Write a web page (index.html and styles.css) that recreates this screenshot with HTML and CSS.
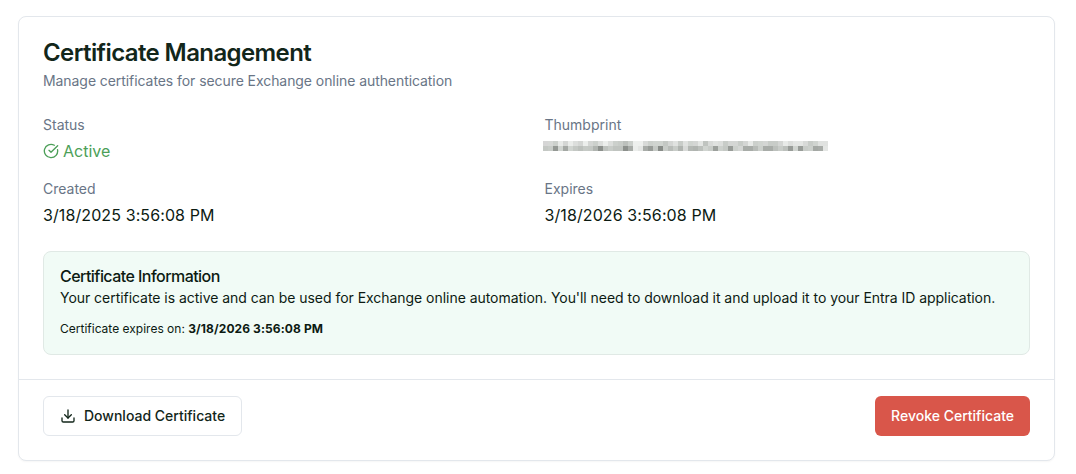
FILE: index.html
```html
<!DOCTYPE html>
<html lang="en">
<head>
<meta charset="utf-8">
<title>Certificate Management</title>
<link rel="stylesheet" href="styles.css">
</head>
<body>
<section class="card">
  <header class="card-header">
    <h1>Certificate Management</h1>
    <p>Manage certificates for secure Exchange online authentication</p>
  </header>
  <div class="card-body">
    <div class="grid">
      <div class="field">
        <div class="label">Status</div>
        <div class="value active">
          <svg class="icon" viewBox="0 0 24 24" fill="none" stroke="currentColor" stroke-width="2" stroke-linecap="round" stroke-linejoin="round"><path d="M21.8 10A10 10 0 1 1 17 3.34"/><path d="m9 11 3 3L22 4"/></svg>
          <span>Active</span>
        </div>
      </div>
      <div class="field">
        <div class="label">Thumbprint</div>
        <div class="value thumb">
          <svg class="mosaic" viewBox="0 0 57 2" shape-rendering="crispEdges" preserveAspectRatio="none" aria-label="Redacted thumbprint">
            <rect x="0" y="0" width="1" height="1" fill="#d6d6d6"/><rect x="1" y="0" width="1" height="1" fill="#d6d8d6"/><rect x="2" y="0" width="1" height="1" fill="#ccd0cc"/><rect x="3" y="0" width="1" height="1" fill="#e8eae8"/><rect x="4" y="0" width="1" height="1" fill="#d4d6d4"/><rect x="5" y="0" width="1" height="1" fill="#eaecea"/><rect x="6" y="0" width="1" height="1" fill="#dcdedc"/><rect x="7" y="0" width="1" height="1" fill="#d4d6d4"/><rect x="8" y="0" width="1" height="1" fill="#eceeec"/><rect x="9" y="0" width="1" height="1" fill="#d4d6d4"/><rect x="10" y="0" width="1" height="1" fill="#ccd0cc"/><rect x="11" y="0" width="1" height="1" fill="#dcdedc"/><rect x="12" y="0" width="1" height="1" fill="#eceeec"/><rect x="13" y="0" width="1" height="1" fill="#dcdedc"/><rect x="14" y="0" width="1" height="1" fill="#ccd0cc"/><rect x="15" y="0" width="1" height="1" fill="#c8ccc8"/><rect x="16" y="0" width="1" height="1" fill="#bcc0bc"/><rect x="17" y="0" width="1" height="1" fill="#ccd0cc"/><rect x="18" y="0" width="1" height="1" fill="#eef0ee"/><rect x="19" y="0" width="1" height="1" fill="#eef0ee"/><rect x="20" y="0" width="1" height="1" fill="#d8dad8"/><rect x="21" y="0" width="1" height="1" fill="#ccd0cc"/><rect x="22" y="0" width="1" height="1" fill="#d0d4d0"/><rect x="23" y="0" width="1" height="1" fill="#d0d4d0"/><rect x="24" y="0" width="1" height="1" fill="#c4c8c4"/><rect x="25" y="0" width="1" height="1" fill="#d4d6d4"/><rect x="26" y="0" width="1" height="1" fill="#e0e2e0"/><rect x="27" y="0" width="1" height="1" fill="#c8ccc8"/><rect x="28" y="0" width="1" height="1" fill="#e0e2e0"/><rect x="29" y="0" width="1" height="1" fill="#d0d4d0"/><rect x="30" y="0" width="1" height="1" fill="#d4d6d4"/><rect x="31" y="0" width="1" height="1" fill="#e4e6e4"/><rect x="32" y="0" width="1" height="1" fill="#c0c4c0"/><rect x="33" y="0" width="1" height="1" fill="#d8dad8"/><rect x="34" y="0" width="1" height="1" fill="#e0e2e0"/><rect x="35" y="0" width="1" height="1" fill="#dcdedc"/><rect x="36" y="0" width="1" height="1" fill="#c8ccc8"/><rect x="37" y="0" width="1" height="1" fill="#d4d6d4"/><rect x="38" y="0" width="1" height="1" fill="#d4d6d4"/><rect x="39" y="0" width="1" height="1" fill="#c8ccc8"/><rect x="40" y="0" width="1" height="1" fill="#d4d6d4"/><rect x="41" y="0" width="1" height="1" fill="#e8eae8"/><rect x="42" y="0" width="1" height="1" fill="#ccd0cc"/><rect x="43" y="0" width="1" height="1" fill="#d0d4d0"/><rect x="44" y="0" width="1" height="1" fill="#d4d6d4"/><rect x="45" y="0" width="1" height="1" fill="#c8ccc8"/><rect x="46" y="0" width="1" height="1" fill="#c8ccc8"/><rect x="47" y="0" width="1" height="1" fill="#d4d6d4"/><rect x="48" y="0" width="1" height="1" fill="#e8eae8"/><rect x="49" y="0" width="1" height="1" fill="#dcdedc"/><rect x="50" y="0" width="1" height="1" fill="#e4e6e4"/><rect x="51" y="0" width="1" height="1" fill="#e4e6e4"/><rect x="52" y="0" width="1" height="1" fill="#d8dad8"/><rect x="53" y="0" width="1" height="1" fill="#c8ccc8"/><rect x="54" y="0" width="1" height="1" fill="#d0d4d0"/><rect x="55" y="0" width="1" height="1" fill="#e0e2e0"/><rect x="56" y="0" width="1" height="1" fill="#e0e2e0"/>
            <rect x="0" y="1" width="1" height="1" fill="#c4c8c4"/><rect x="1" y="1" width="1" height="1" fill="#c8ccc8"/><rect x="2" y="1" width="1" height="1" fill="#949894"/><rect x="3" y="1" width="1" height="1" fill="#d0d4d0"/><rect x="4" y="1" width="1" height="1" fill="#a4a8a4"/><rect x="5" y="1" width="1" height="1" fill="#d0d4d0"/><rect x="6" y="1" width="1" height="1" fill="#c4c8c4"/><rect x="7" y="1" width="1" height="1" fill="#bcc0bc"/><rect x="8" y="1" width="1" height="1" fill="#c6cac6"/><rect x="9" y="1" width="1" height="1" fill="#c4c8c4"/><rect x="10" y="1" width="1" height="1" fill="#b0b4b0"/><rect x="11" y="1" width="1" height="1" fill="#8c908c"/><rect x="12" y="1" width="1" height="1" fill="#bec2be"/><rect x="13" y="1" width="1" height="1" fill="#c8ccc8"/><rect x="14" y="1" width="1" height="1" fill="#c0c4c0"/><rect x="15" y="1" width="1" height="1" fill="#c0c4c0"/><rect x="16" y="1" width="1" height="1" fill="#8c908c"/><rect x="17" y="1" width="1" height="1" fill="#a8aca8"/><rect x="18" y="1" width="1" height="1" fill="#eceeec"/><rect x="19" y="1" width="1" height="1" fill="#e4e6e4"/><rect x="20" y="1" width="1" height="1" fill="#a8aca8"/><rect x="21" y="1" width="1" height="1" fill="#989c98"/><rect x="22" y="1" width="1" height="1" fill="#c4c8c4"/><rect x="23" y="1" width="1" height="1" fill="#888c88"/><rect x="24" y="1" width="1" height="1" fill="#c8ccc8"/><rect x="25" y="1" width="1" height="1" fill="#b8bcb8"/><rect x="26" y="1" width="1" height="1" fill="#c8ccc8"/><rect x="27" y="1" width="1" height="1" fill="#b0b4b0"/><rect x="28" y="1" width="1" height="1" fill="#d8dad8"/><rect x="29" y="1" width="1" height="1" fill="#b4b8b4"/><rect x="30" y="1" width="1" height="1" fill="#b0b4b0"/><rect x="31" y="1" width="1" height="1" fill="#bcc0bc"/><rect x="32" y="1" width="1" height="1" fill="#d0d4d0"/><rect x="33" y="1" width="1" height="1" fill="#c8ccc8"/><rect x="34" y="1" width="1" height="1" fill="#9ca09c"/><rect x="35" y="1" width="1" height="1" fill="#ccd0cc"/><rect x="36" y="1" width="1" height="1" fill="#c4c8c4"/><rect x="37" y="1" width="1" height="1" fill="#989c98"/><rect x="38" y="1" width="1" height="1" fill="#ccd0cc"/><rect x="39" y="1" width="1" height="1" fill="#d4d6d4"/><rect x="40" y="1" width="1" height="1" fill="#a8aca8"/><rect x="41" y="1" width="1" height="1" fill="#a8aca8"/><rect x="42" y="1" width="1" height="1" fill="#b8bcb8"/><rect x="43" y="1" width="1" height="1" fill="#ccd0cc"/><rect x="44" y="1" width="1" height="1" fill="#a8aca8"/><rect x="45" y="1" width="1" height="1" fill="#a8aca8"/><rect x="46" y="1" width="1" height="1" fill="#bcc0bc"/><rect x="47" y="1" width="1" height="1" fill="#c8ccc8"/><rect x="48" y="1" width="1" height="1" fill="#bcc0bc"/><rect x="49" y="1" width="1" height="1" fill="#989c98"/><rect x="50" y="1" width="1" height="1" fill="#d0d4d0"/><rect x="51" y="1" width="1" height="1" fill="#989c98"/><rect x="52" y="1" width="1" height="1" fill="#c8ccc8"/><rect x="53" y="1" width="1" height="1" fill="#ccd0cc"/><rect x="54" y="1" width="1" height="1" fill="#a4a8a4"/><rect x="55" y="1" width="1" height="1" fill="#a8aca8"/><rect x="56" y="1" width="1" height="1" fill="#e4e6e4"/>
          </svg>
        </div>
      </div>
      <div class="field">
        <div class="label">Created</div>
        <div class="value date">3/18/2025 3:56:08 PM</div>
      </div>
      <div class="field">
        <div class="label">Expires</div>
        <div class="value date">3/18/2026 3:56:08 PM</div>
      </div>
    </div>
    <div class="info">
      <h2>Certificate Information</h2>
      <p>Your certificate is active and can be used for Exchange online automation. You'll need to download it and upload it to your Entra ID application.</p>
      <p class="small">Certificate expires on: <strong>3/18/2026 3:56:08 PM</strong></p>
    </div>
  </div>
  <footer class="card-footer">
    <button class="btn outline">
      <svg class="icon" viewBox="0 0 24 24" fill="none" stroke="currentColor" stroke-width="2" stroke-linecap="round" stroke-linejoin="round"><path d="M21 15v4a2 2 0 0 1-2 2H5a2 2 0 0 1-2-2v-4"/><path d="m7 10 5 5 5-5"/><path d="M12 15V3"/></svg>
      Download Certificate
    </button>
    <button class="btn danger">Revoke Certificate</button>
  </footer>
</section>
</body>
</html>
```
FILE: styles.css
```css
* { box-sizing: border-box; }
html, body { margin: 0; background: #fff; }
body { padding: 16px 21px 13px 18px; font-family: Inter, "Liberation Sans", sans-serif; color: #0c1a12; }
.card { border: 1px solid #e3e7ec; border-radius: 8px; background: #fff; box-shadow: 0 1px 2px rgba(0,0,0,.04); }
.card-header { padding: 24px 24px 0; }
h1 { margin: 0; font-size: 24px; line-height: 24px; font-weight: 600; color: #12261a; letter-spacing: -0.6px; }
.card-header p { margin: 6px 0 0; font-size: 14px; line-height: 20px; color: #697586; letter-spacing: -0.07px; }
.card-body { padding: 24px; }
.grid { display: grid; grid-template-columns: 1fr 1fr; column-gap: 16px; row-gap: 16px; }
.label { font-size: 14px; line-height: 20px; color: #697586; }
.value { margin-top: 4px; font-size: 16px; line-height: 24px; color: #0c1a12; display: flex; align-items: center; gap: 4px; }
.date { letter-spacing: 0.1px; }
.active { color: #4c9f58; }
.icon { width: 16px; height: 16px; flex: none; }
.thumb { height: 24px; align-items: flex-start; }
.mosaic { display: block; width: 285px; height: 10px; margin: 2px 0 0 -2px; }
.info { margin-top: 24px; padding: 16px 16px 15px; background: #f1fbf6; border: 1px solid #e0e9e5; border-radius: 8px; }
.info h2 { margin: 0 0 4px; font-size: 16px; line-height: 16px; font-weight: 500; color: #0c1a12; letter-spacing: -0.55px; }
.info p { margin: 0; font-size: 14px; line-height: 20px; color: #0c1a12; letter-spacing: -0.04px; }
.info .small { margin-top: 11px; font-size: 12px; line-height: 20px; letter-spacing: 0; }
.small strong { font-weight: 700; letter-spacing: 0.1px; }
.card-footer { display: flex; justify-content: space-between; align-items: center; padding: 16px 24px 24px; border-top: 1px solid #e3e7ec; }
.btn { display: inline-flex; align-items: center; gap: 8px; height: 40px; padding: 0 16px; border-radius: 6px; font: 500 14px/20px Inter, "Liberation Sans", sans-serif; cursor: pointer; }
.outline { background: #fff; border: 1px solid #e3e7ec; color: #12261a; }
.danger { background: #d9564a; border: 0; color: #fff; }
```
